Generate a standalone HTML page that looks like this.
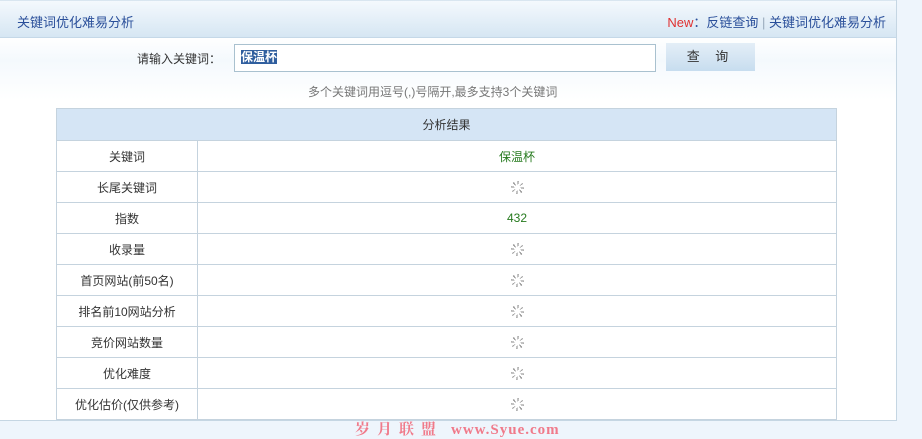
<!DOCTYPE html>
<html><head><meta charset="utf-8"><style>
body{margin:0;width:922px;height:439px;background:#eef5fc;font-family:"Liberation Sans","Noto Sans CJK SC",sans-serif;font-size:12px;color:#333;position:relative;overflow:hidden}
.panel{position:absolute;left:0;top:0;width:896px;height:420px;background:linear-gradient(#fff 37px,#f4f9fd 60px,#fff 100px);border-right:1px solid #c5d6e3;border-bottom:1px solid #c5d6e3}
.hd{position:absolute;left:0;top:0;width:896px;height:36px;background:linear-gradient(#f4f9fd,#d6e6f3);border-bottom:1px solid #c5d8e8;border-top:1px solid #d9e6f0}
.t1{position:absolute;left:17px;top:11px;font-size:13px;color:#2a4f9a}
.t2{position:absolute;right:10px;top:11px;font-size:13px;color:#2a4f9a}
.t2 .n{color:#e03030}
.lbl{position:absolute;left:137px;top:50px;font-size:12px;color:#333}
.inp{position:absolute;left:234px;top:44px;width:420px;height:26px;border:1px solid #a9c1cf;background:#fff}
.inp span{position:absolute;left:6px;top:5px;background:#2f5e9e;color:#fff;font-weight:bold;font-size:12px;line-height:14px}
.btn{position:absolute;left:666px;top:43px;width:89px;height:28px;background:linear-gradient(#e4eef7,#c7ddef);text-align:center;line-height:28px;font-size:13px;color:#333;letter-spacing:6px}
.tip{position:absolute;left:308px;top:83px;color:#777;font-size:12px}
table{position:absolute;left:56px;top:108px;width:781px;border-collapse:collapse}
td{border:1px solid #c5d3de;height:30px;text-align:center;font-size:12px;color:#333;padding:0}
th{background:#d5e5f5;border:1px solid #c5d3de;height:29px;font-weight:normal;font-size:12px;color:#333}
td.l{width:140px}
.g{color:#267a1e}
.sp{display:inline-block;width:13px;height:13px;border-radius:50%;background:radial-gradient(#fff 30%,transparent 32%),repeating-conic-gradient(#555 0 12deg,transparent 12deg 45deg);opacity:.7;vertical-align:middle}
.wm{position:absolute;left:355px;top:418px;color:#f07a8a;font-size:15px;font-weight:bold;font-family:"Liberation Serif","Noto Serif CJK SC",serif;white-space:nowrap}
.wm .c{letter-spacing:7px}
.wm .e{letter-spacing:1px;margin-left:8px}
</style></head><body>
<div class="panel">
<div class="hd"><div class="t1">关键词优化难易分析</div><div class="t2"><span class="n">New</span>：反链查询 <span style="color:#9ab">|</span> 关键词优化难易分析</div></div>
<div class="lbl">请输入关键词：</div>
<div class="inp"><span>保温杯</span></div>
<div class="btn">查 询</div>
<div class="tip">多个关键词用逗号(,)号隔开,最多支持3个关键词</div>
<table>
<tr><th colspan="2">分析结果</th></tr>
<tr><td class="l">关键词</td><td class="g">保温杯</td></tr>
<tr><td class="l">长尾关键词</td><td><span class="sp"></span></td></tr>
<tr><td class="l">指数</td><td class="g">432</td></tr>
<tr><td class="l">收录量</td><td><span class="sp"></span></td></tr>
<tr><td class="l">首页网站(前50名)</td><td><span class="sp"></span></td></tr>
<tr><td class="l">排名前10网站分析</td><td><span class="sp"></span></td></tr>
<tr><td class="l">竞价网站数量</td><td><span class="sp"></span></td></tr>
<tr><td class="l">优化难度</td><td><span class="sp"></span></td></tr>
<tr><td class="l">优化估价(仅供参考)</td><td><span class="sp"></span></td></tr>
</table>
</div>
<div class="wm"><span class="c">岁月联盟</span><span class="e">www.Syue.com</span></div>
</body></html>
